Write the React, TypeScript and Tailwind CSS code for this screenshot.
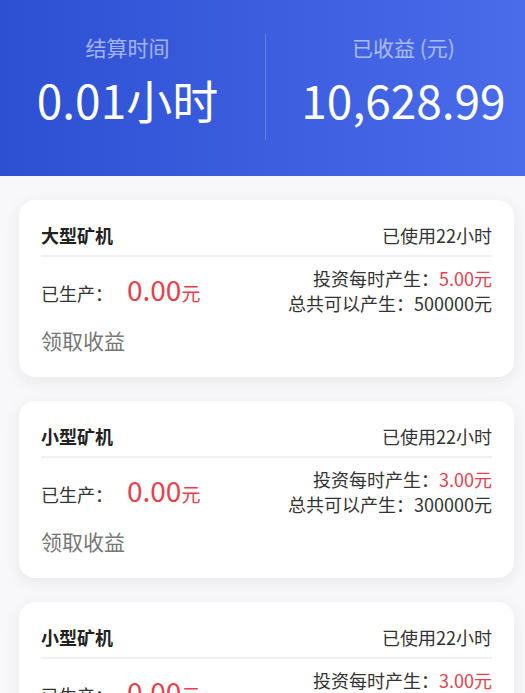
import React from 'react';

const machines = [
  { name: '大型矿机', used: '已使用22小时', rate: '5.00元', total: '500000元' },
  { name: '小型矿机', used: '已使用22小时', rate: '3.00元', total: '300000元' },
  { name: '小型矿机', used: '已使用22小时', rate: '3.00元', total: '300000元' },
];

const MachineCard = ({ item }: any) => {
  return (
    <div className="rounded-2xl bg-white px-[22px] pt-[22px] pb-[24px] shadow-[0_4px_16px_rgba(40,40,80,0.08)]">
      <div className="flex items-center justify-between pb-[7px] leading-[26px]">
        <span className="text-[18px] font-bold text-[#222]">{item.name}</span>
        <span className="text-[18px] text-[#333]">{item.used}</span>
      </div>
      <div className="h-[2px] bg-[#f0f0f2]" />
      <div className="mt-[9px] flex items-center justify-between">
        <div className="flex items-baseline text-[18px] text-[#333]">
          <span>已生产：</span>
          <span className="ml-[14px] text-[28px] leading-none text-[#e5404c]">0.00</span>
          <span className="text-[19px] text-[#e5404c]">元</span>
        </div>
        <div className="text-right text-[18px] leading-[25px] text-[#333]">
          <div>
            投资每时产生：<span className="text-[#e5404c]">{item.rate}</span>
          </div>
          <div>总共可以产生：{item.total}</div>
        </div>
      </div>
      <div className="mt-[11px] text-[21px] leading-[26px] text-[#777]">领取收益</div>
    </div>
  );
};

export default function App() {
  return (
    <div className="min-h-screen bg-[#f8f8fa] font-['Noto_Sans_CJK_SC',sans-serif]">
      <div className="grid h-[176px] grid-cols-[265px_1px_1fr] items-start bg-gradient-to-r from-[#2d4fd2] to-[#4a6ceb] pt-[32px]">
        <div className="flex flex-col items-center pr-[10px]">
          <span className="text-[21px] leading-[30px] text-white/55">结算时间</span>
          <span className="mt-[9px] text-[46px] leading-[56px] text-white">0.01小时</span>
        </div>
        <div className="mt-[2px] h-[106px] bg-white/20" />
        <div className="flex flex-col items-center pl-[16px]">
          <span className="text-[21px] leading-[30px] text-white/55">已收益 (元)</span>
          <span className="mt-[9px] text-[46px] leading-[56px] text-white">10,628.99</span>
        </div>
      </div>
      <div className="flex flex-col gap-[24px] pl-[19px] pr-[11px] pt-[24px] pb-[24px]">
        {machines.map((m, i) => (
          <MachineCard key={i} item={m} />
        ))}
      </div>
    </div>
  );
}
